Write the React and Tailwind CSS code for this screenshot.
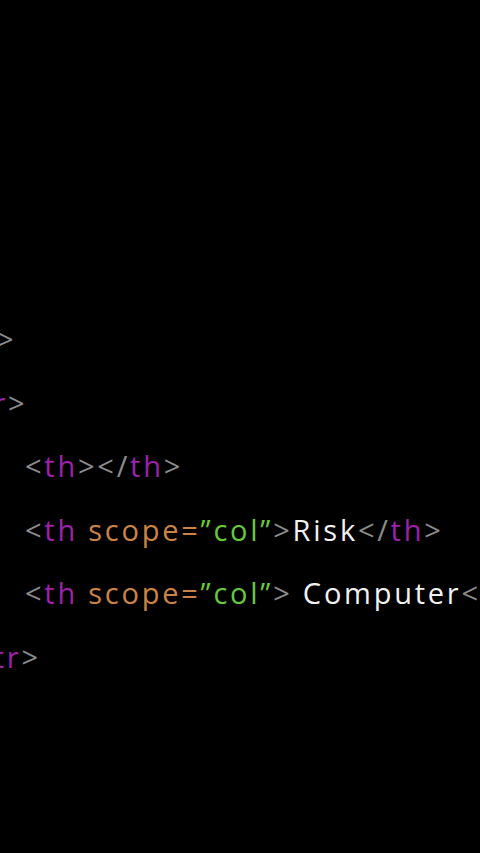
import React from 'react';

const C = {
  p: 'text-[#8c8c8c]',
  tag: 'text-[#9b22ab]',
  attr: 'text-[#cc8444]',
  str: 'text-[#66c93a]',
  txt: 'text-[#f2f2f2]',
};

const lines = [
  { indent: 'ml-[-3px]', tokens: [['>', 'p']] },
  { indent: 'ml-[-39px]', tokens: [['<', 'p'], ['tr', 'tag'], ['>', 'p']] },
  { indent: 'ml-[25px]', tokens: [['<', 'p'], ['th', 'tag'], ['></', 'p'], ['th', 'tag'], ['>', 'p']] },
  {
    indent: 'ml-[25px]',
    tokens: [
      ['<', 'p'], ['th', 'tag'], [' scope=', 'attr'], ['\u201Dcol\u201D', 'str'], ['>', 'p'],
      ['Risk', 'txt'], ['</', 'p'], ['th', 'tag'], ['>', 'p'],
    ],
  },
  {
    indent: 'ml-[25px]',
    tokens: [
      ['<', 'p'], ['th', 'tag'], [' scope=', 'attr'], ['\u201Dcol\u201D', 'str'], ['> ', 'p'],
      ['Computer', 'txt'], ['</', 'p'], ['th', 'tag'], ['>', 'p'],
    ],
  },
  { indent: 'ml-[-39px]', tokens: [['</', 'p'], ['tr', 'tag'], ['>', 'p']] },
];

export default function App() {
  return (
    <div className="w-[480px] h-[853px] bg-black overflow-hidden">
      <div
        className="pt-[307px] flex flex-col text-[29px] leading-[63.5px] tracking-[0.095em] whitespace-pre"
        style={{ fontFamily: '"Open Sans", "Noto Sans", sans-serif' }}
      >
        {lines.map((line, i) => (
          <div key={i} className={`flex ${line.indent}`}>
            {line.tokens.map(([t, k], j) => (
              <span key={j} className={C[k]}>{t}</span>
            ))}
          </div>
        ))}
      </div>
    </div>
  );
}
